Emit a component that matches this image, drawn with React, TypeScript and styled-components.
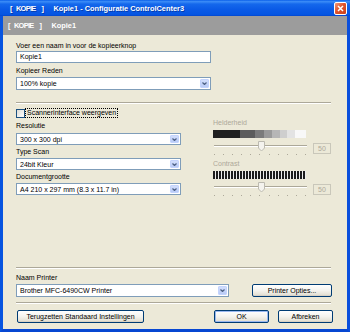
import React from "react";
import styled, { createGlobalStyle } from "styled-components";

const Global = createGlobalStyle`
  html, body { margin: 0; padding: 0; background: #ECE9D8; }
  body { font-family: "Liberation Sans", Arial, sans-serif; }
  * { box-sizing: border-box; }
`;

const FONT = `"Liberation Sans", Arial, sans-serif`;

const Window = styled.div`
  width: 350px;
  height: 332px;
  display: flex;
  flex-direction: column;
  font-family: ${FONT};
  font-size: 7px;
  color: #000;
  overflow: hidden;
`;

const TitleBar = styled.div`
  height: 16px;
  flex: none;
  display: flex;
  align-items: center;
  padding: 0 3px 0 10px;
  background: linear-gradient(180deg, #0a5fe9 0%, #3b8cf7 10%, #1468ec 25%, #0a5ae6 60%, #0555e2 90%, #0246cf 100%);
  color: #fff;
  text-shadow: 1px 1px 0 rgba(0, 20, 90, 0.45);
`;

const Heading = styled.div`
  flex: 1;
  display: flex;
  align-items: center;
  font-weight: bold;
  font-size: 7.4px;
  white-space: pre;
`;

const Bracket = styled.span<{ $ml?: number }>`
  margin-left: ${(p) => p.$ml ?? 0}px;
`;

const Tag = styled.span`
  margin-left: 3.5px;
  letter-spacing: -0.7px;
`;

const HeadName = styled.span`
  margin-left: 9.5px;
`;

const CloseBtn = styled.div`
  width: 13px;
  height: 13px;
  margin-top: 1px;
  border: 1px solid #fff;
  border-radius: 2px;
  background: linear-gradient(135deg, #f29a7a 0%, #e0542c 45%, #c8401a 100%);
  display: flex;
  align-items: center;
  justify-content: center;
`;

const Frame = styled.div`
  flex: 1;
  display: flex;
  flex-direction: column;
  border-left: 3px solid #0754e0;
  border-right: 3px solid #0a4fdc;
  border-bottom: 3px solid #0747d2;
  background: #ECE9D8;
  min-height: 0;
`;

const Banner = styled.div`
  height: 19px;
  flex: none;
  background: #9c9c9c;
  color: #fff;
  display: flex;
  align-items: center;
  padding-left: 5px;
`;

const Content = styled.div`
  flex: 1;
  display: flex;
  flex-direction: column;
  padding: 0 16px 6px 13px;
`;

const Label = styled.div<{ $mt?: number; $disabled?: boolean }>`
  height: 10px;
  line-height: 10px;
  margin-top: ${(p) => p.$mt ?? 0}px;
  color: ${(p) => (p.$disabled ? "#ACA899" : "#000")};
  white-space: nowrap;
`;

const TextBox = styled.div<{ $w: number; $mt?: number }>`
  width: ${(p) => p.$w}px;
  height: 12px;
  margin-top: ${(p) => p.$mt ?? 0}px;
  border: 1px solid #7f9db9;
  background: #fff;
  padding-left: 3px;
  line-height: 10px;
  white-space: nowrap;
`;

const SelectBox = styled.div<{ $w: number; $mt?: number; $h?: number }>`
  width: ${(p) => p.$w}px;
  height: ${(p) => p.$h ?? 12}px;
  margin-top: ${(p) => p.$mt ?? 0}px;
  border: 1px solid #7f9db9;
  background: #fff;
  display: flex;
  align-items: stretch;
  flex: none;
`;

const SelectText = styled.div`
  flex: 1;
  padding-left: 3px;
  display: flex;
  align-items: center;
  white-space: nowrap;
`;

const ArrowBtn = styled.div`
  width: 9px;
  margin: 1px;
  border: 1px solid #c3d3fd;
  border-radius: 1px;
  background: linear-gradient(180deg, #d2defc 0%, #b9cbf6 100%);
  display: flex;
  align-items: center;
  justify-content: center;
`;

const Separator = styled.div<{ $mt: number }>`
  height: 2px;
  flex: none;
  margin-top: ${(p) => p.$mt}px;
  border-top: 1px solid #aca899;
  border-bottom: 1px solid #fff;
`;

const CheckRow = styled.div`
  margin-top: 4px;
  height: 10px;
  display: flex;
  align-items: center;
`;

const CheckBox = styled.div`
  width: 9px;
  height: 9px;
  border: 1px solid #1c5180;
  background: linear-gradient(135deg, #dcdcd7 0%, #fff 100%);
  flex: none;
`;

const FocusLabel = styled.div`
  height: 10px;
  line-height: 8px;
  padding: 0 1px;
  border: 1px dotted #000;
  white-space: nowrap;
`;

const Columns = styled.div`
  display: flex;
  align-items: flex-start;
`;

const LeftCol = styled.div`
  width: 197px;
  display: flex;
  flex-direction: column;
`;

const RightCol = styled.div`
  flex: 1;
  display: flex;
  flex-direction: column;
`;

const Strip = styled.div<{ $kind: "bright" | "contrast"; $mt: number }>`
  width: 93px;
  height: 8px;
  margin-top: ${(p) => p.$mt}px;
  background: ${(p) =>
    p.$kind === "bright"
      ? `linear-gradient(90deg, #202020 0 29%, #5c5c5c 29% 45%, #7b7b7b 45% 55%, #9a9a9a 55% 63%, #b6b6b6 63% 72%, #cecece 72% 80%, #e3e3e3 80% 88%, #f8f8f8 88% 100%)`
      : `repeating-linear-gradient(90deg, #1c1c1c 0 2px, #ededed 2px 3px)`};
`;

const SliderRow = styled.div<{ $mt: number }>`
  margin-top: ${(p) => p.$mt}px;
  height: 15px;
  display: flex;
  align-items: flex-start;
`;

const SliderArea = styled.div`
  width: 94px;
  height: 15px;
  position: relative;
`;

const Track = styled.div`
  position: absolute;
  left: 1px;
  right: 0;
  top: 4px;
  height: 2px;
  border-top: 1px solid #aca899;
  border-bottom: 1px solid #fff;
`;

const Thumb = styled.svg`
  position: absolute;
  left: 45px;
  top: 0px;
`;

const Ticks = styled.div`
  position: absolute;
  left: 1px;
  right: 1px;
  bottom: 1px;
  display: flex;
  justify-content: space-between;
`;

const Tick = styled.span`
  width: 1px;
  height: 1px;
  background: #aca899;
`;

const ValueBox = styled.div`
  margin-left: auto;
  margin-top: 2px;
  width: 18px;
  height: 11px;
  border: 1px solid #c9c7ba;
  background: #ECE9D8;
  color: #aca899;
  line-height: 9px;
  padding-left: 4px;
`;

const Spacer = styled.div`
  flex: 1;
`;

const Row = styled.div<{ $mt: number }>`
  display: flex;
  align-items: flex-start;
  margin-top: ${(p) => p.$mt}px;
`;

const Button = styled.div<{ $w: number; $ml?: number; $default?: boolean }>`
  width: ${(p) => p.$w}px;
  height: 13px;
  margin-left: ${(p) => p.$ml ?? 0}px;
  border: 1px solid #003c74;
  border-radius: 2px;
  background: linear-gradient(180deg, #ffffff 0%, #f4f3ee 50%, #e6e3d8 85%, #d6d0c5 100%);
  box-shadow: ${(p) => (p.$default ? "inset 0 0 0 1px #9ab8f0" : "inset 0 -1px 0 #d8d2c6")};
  display: flex;
  align-items: center;
  justify-content: center;
  white-space: nowrap;
  flex: none;
`;

const Arrow = () => (
  <svg width="5" height="3" viewBox="0 0 5 3">
    <path d="M0.5 0.5 L2.5 2.5 L4.5 0.5" stroke="#4d6185" strokeWidth="1.2" fill="none" />
  </svg>
);

const Select: React.FC<{ w: number; mt?: number; h?: number; children: React.ReactNode }> = ({ w, mt, h, children }) => (
  <SelectBox $w={w} $mt={mt} $h={h}>
    <SelectText>{children}</SelectText>
    <ArrowBtn>
      <Arrow />
    </ArrowBtn>
  </SelectBox>
);

const Slider: React.FC<{ mt: number }> = ({ mt }) => (
  <SliderRow $mt={mt}>
    <SliderArea>
      <Track />
      <Thumb width="7" height="11" viewBox="0 0 7 11">
        <path d="M0.5 0.5 H6.5 V7 L3.5 10 L0.5 7 Z" fill="#f4f3ee" stroke="#bcbab0" strokeWidth="1" />
      </Thumb>
      <Ticks>
        {Array.from({ length: 11 }).map((_, i) => (
          <Tick key={i} />
        ))}
      </Ticks>
    </SliderArea>
    <ValueBox>50</ValueBox>
  </SliderRow>
);

const HeadingLine: React.FC<{ name: string }> = ({ name }) => (
  <Heading>
    <Bracket>[</Bracket>
    <Tag>KOPIE</Tag>
    <Bracket $ml={6}>]</Bracket>
    <HeadName>{name}</HeadName>
  </Heading>
);

export default function App() {
  return (
    <Window>
      <Global />
      <TitleBar>
        <HeadingLine name="Kopie1 - Configuratie ControlCenter3" />
        <CloseBtn>
          <svg width="7" height="7" viewBox="0 0 7 7">
            <path d="M1 1 L6 6 M6 1 L1 6" stroke="#fff" strokeWidth="1.5" />
          </svg>
        </CloseBtn>
      </TitleBar>
      <Frame>
        <Banner>
          <HeadingLine name="Kopie1" />
        </Banner>
        <Content>
          <Label $mt={6}>Voer een naam in voor de kopieerknop</Label>
          <TextBox $w={195} $mt={0}>Kopie1</TextBox>
          <Label $mt={3}>Kopieer Reden</Label>
          <Select w={195} mt={1} h={13}>100% kopie</Select>
          <Separator $mt={12} />
          <CheckRow>
            <CheckBox />
            <FocusLabel>Scannerinterface weergeven</FocusLabel>
          </CheckRow>
          <Columns>
            <LeftCol>
              <Label $mt={3}>Resolutie</Label>
              <Select w={165} mt={2}>300 x 300 dpi</Select>
              <Label $mt={2}>Type Scan</Label>
              <Select w={165} mt={1}>24bit Kleur</Select>
              <Label $mt={2}>Documentgrootte</Label>
              <Select w={165} mt={1}>A4 210 x 297 mm (8.3 x 11.7 in)</Select>
            </LeftCol>
            <RightCol>
              <Label $mt={0} $disabled>Helderheid</Label>
              <Strip $kind="bright" $mt={2} />
              <Slider mt={3} />
              <Label $mt={3} $disabled>Contrast</Label>
              <Strip $kind="contrast" $mt={2} />
              <Slider mt={3} />
            </RightCol>
          </Columns>
          <Spacer />
          <Separator $mt={0} />
          <Label $mt={4}>Naam Printer</Label>
          <Row $mt={1}>
            <Select w={213} h={13}>Brother MFC-6490CW Printer</Select>
            <Button $w={80} $ml={23}>Printer Opties...</Button>
          </Row>
          <Separator $mt={5} />
          <Row $mt={6}>
            <Button $w={127} $ml={1}>Terugzetten Standaard Instellingen</Button>
            <Button $w={55} $ml={70} $default>OK</Button>
            <Button $w={55} $ml={9}>Afbreken</Button>
          </Row>
        </Content>
      </Frame>
    </Window>
  );
}
